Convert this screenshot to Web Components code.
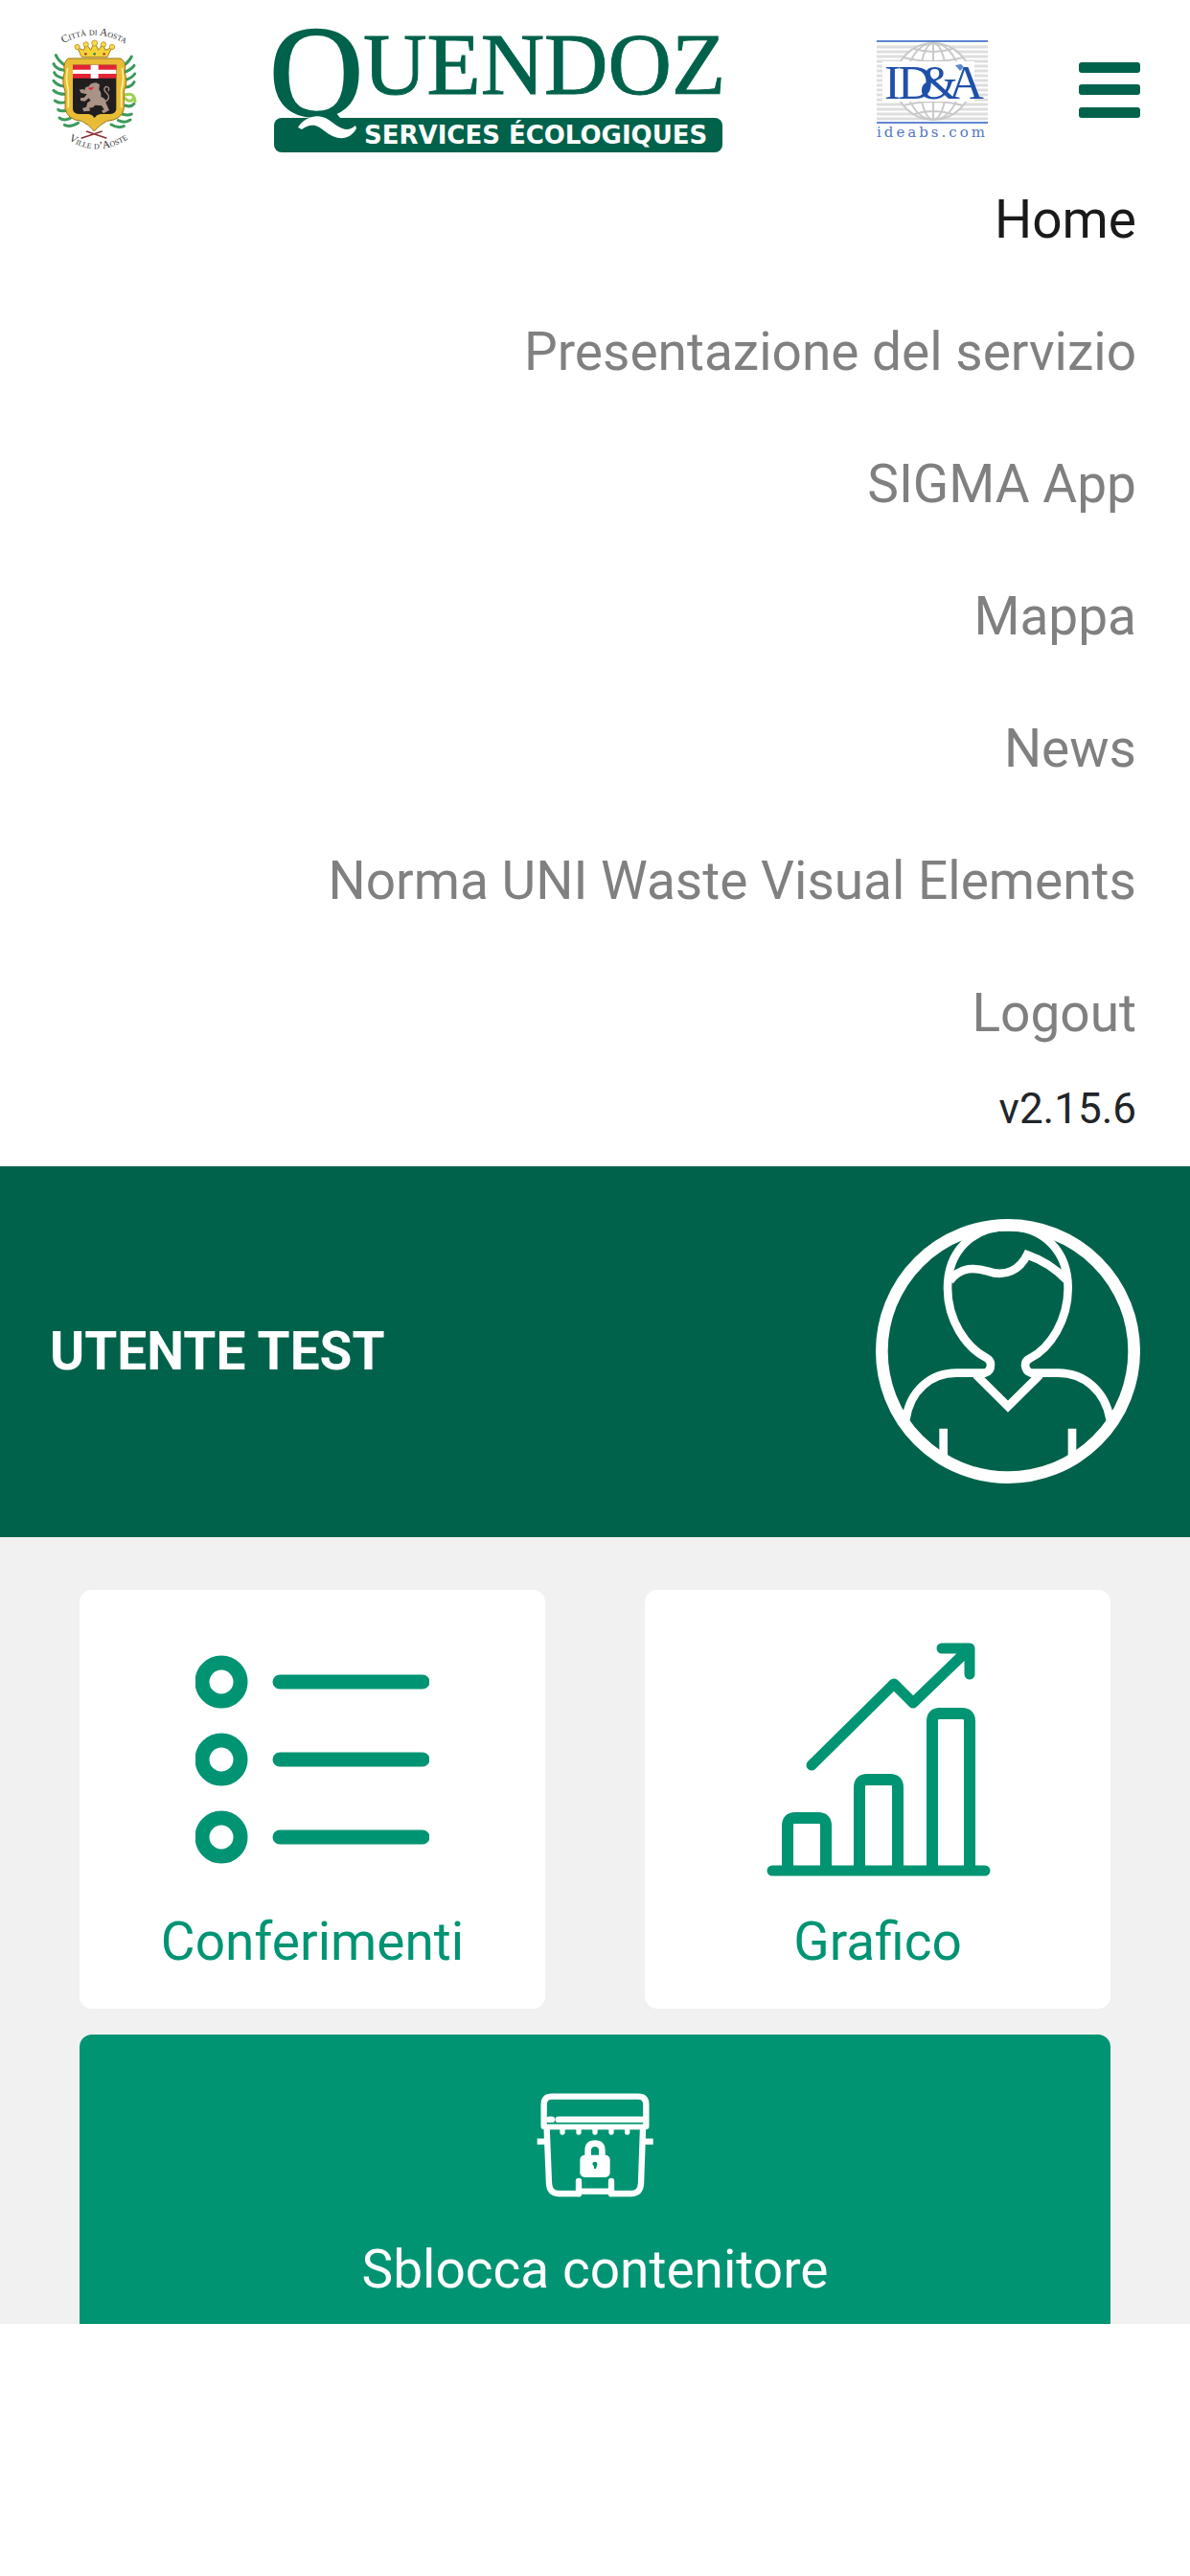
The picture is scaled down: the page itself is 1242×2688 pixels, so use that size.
<!DOCTYPE html>
<html lang="it">
<head>
<meta charset="utf-8">
<meta name="viewport" content="width=device-width, initial-scale=1">
<title>Quendoz</title>
<style>
:root{--dark:#00624b;--teal:#009473;--page:#f1f1f1;--gutter:52px;--text:55px;--line:81px}
body{margin:0;background:#fff;font-family:Roboto,"Liberation Sans",sans-serif;font-size:var(--text);line-height:var(--line);color:#212529}
</style>
</head>
<body>
<app-shell>
  <app-header slot="header"></app-header>
  <app-menu slot="header" version="v2.15.6">
    <menu-item current>Home</menu-item>
    <menu-item>Presentazione del servizio</menu-item>
    <menu-item>SIGMA App</menu-item>
    <menu-item>Mappa</menu-item>
    <menu-item>News</menu-item>
    <menu-item>Norma UNI Waste Visual Elements</menu-item>
    <menu-item>Logout</menu-item>
  </app-menu>
  <user-banner>UTENTE TEST</user-banner>
  <tile-grid>
    <action-tile icon="list">Conferimenti</action-tile>
    <action-tile icon="chart">Grafico</action-tile>
    <action-tile icon="bin" primary>Sblocca contenitore</action-tile>
  </tile-grid>
</app-shell>

<script>
const define = (name, render) => customElements.define(name, class extends HTMLElement {
  connectedCallback() {
    if (this.shadowRoot) return;
    this.attachShadow({ mode: 'open' }).innerHTML = render(this);
  }
});

define('app-shell', () => `
<style>:host{display:block}header,main{display:block}</style>
<header><slot name="header"></slot></header>
<main><slot></slot></main>`);

define('city-crest', () => `
<style>:host{display:block}svg{display:block;width:93px;height:133px;overflow:visible}</style>
<svg viewBox="36 36 279 399" role="img" aria-label="Città di Aosta">
  <defs>
    <path id="top" d="M60 102 Q172 28 290 102"/>
    <path id="bot" d="M72 376 Q180 468 304 374"/>
  </defs>
  <g font-family="Liberation Serif, serif" font-size="34" font-variant="small-caps" fill="#333" text-anchor="middle">
    <text><textPath href="#top" startOffset="50%">Città di Aosta</textPath></text>
    <text><textPath href="#bot" startOffset="50%">Ville d’Aoste</textPath></text>
  </g>
  <g fill="none" stroke="#3d9a5b" stroke-width="9" stroke-linecap="round">
    <path d="M84 160 Q62 145 55 128M80 175 Q55 172 48 155M80 200 Q55 195 50 182M80 225 Q58 222 48 208M84 250 Q60 250 48 238M84 275 Q64 280 52 270M90 300 Q70 306 62 298M100 325 Q80 335 66 324M125 340 Q100 355 82 346"/>
    <path d="M268 160 Q286 145 292 132M272 180 Q292 172 300 160M274 205 Q292 200 302 186M274 228 Q292 226 300 212M272 285 Q290 292 300 280M262 312 Q282 318 292 312M250 332 Q272 342 288 330M228 345 Q250 358 268 350"/>
    <path stroke="#9ed052" d="M272 252 Q300 242 303 272M270 262 Q290 280 298 262"/>
  </g>
  <path d="M134 388 L200 366 M214 388 L150 366" stroke="#8d2f35" stroke-width="5"/>
  <path d="M94 138 Q76 150 82 180 Q72 215 84 240 V296 Q92 330 136 334 Q160 345 175 366 Q192 345 214 334 Q262 330 268 296 V240 Q282 215 270 180 Q278 150 258 138 Z" fill="#e8bd35" stroke="#987318" stroke-width="3"/>
  <path d="M92 168 Q84 200 94 236 V292 M262 168 Q270 200 260 236 V292" fill="none" stroke="#fff0a0" stroke-width="5"/>
  <path d="M122 104 L136 134 H216 L230 104 L210 112 L202 92 L188 112 L176 84 L164 112 L150 92 L142 112 Z" fill="#f5d338" stroke="#a4801e" stroke-width="3"/>
  <g fill="#f5dc4c" stroke="#a4801e" stroke-width="2"><circle cx="122" cy="102" r="8"/><circle cx="149" cy="94" r="8"/><circle cx="176" cy="90" r="9"/><circle cx="204" cy="94" r="8"/><circle cx="231" cy="102" r="8"/></g>
  <g fill="#b53b28"><circle cx="148" cy="124" r="4"/><circle cx="206" cy="124" r="4"/></g><circle cx="176" cy="124" r="4" fill="#2d8752"/>
  <path d="M108 158 H244 V298 Q242 312 222 312 H194 Q182 314 176 324 Q170 314 158 312 H130 Q110 312 108 298Z" fill="#211e1f"/>
  <path d="M108 158 H244 V200 H108Z" fill="#e32435"/>
  <path d="M108 173 H244 V186 H108Z M164 158 H188 V200 H164Z" fill="#fff"/>
  <path d="M146 238 Q144 226 158 226 Q162 214 182 214 L192 220 L190 236 Q198 242 196 258 Q212 262 212 278 L222 300 L204 310 L198 302 L206 298 L198 286 L178 284 Q172 294 160 292 L162 302 L142 304 L138 294 L150 290 L154 276 L164 270 L158 262 L146 272 L132 270 L132 262 L144 260 L152 250 L134 246 L128 236 L140 234 Z" fill="#a99286"/>
  <path d="M208 274 Q230 262 214 246 Q200 234 212 226 Q224 226 220 240" fill="none" stroke="#a99286" stroke-width="4"/>
  <path d="M154 231 L174 227 L166 238Z" fill="#e32435"/>
</svg>`);

define('quendoz-logo', () => `
<style>:host{display:block}svg{display:block;width:469px;height:133px;overflow:visible}</style>
<svg viewBox="0 0 469 133" role="img" aria-label="Quendoz Services Écologiques">
  <g font-family="Liberation Serif, serif" fill="#00624b" stroke="#00624b">
    <text x="-4" y="94" font-size="136" stroke-width="2">Q</text>
    <text x="94" y="71" font-size="92" stroke-width="1">UENDOZ</text>
  </g>
  <rect x="1" y="96" width="468" height="36" rx="8" fill="#00624b"/>
  <path d="M26 106 C32 96 46 90 58 98 C68 105 76 113 86 104 L87 107 C80 120 66 120 54 110 C44 101 37 103 30 108Z" fill="#fff"/>
  <text x="95" y="123" font-family="DejaVu Sans, sans-serif" font-weight="700" font-size="26" fill="#fff">SERVICES ÉCOLOGIQUES</text>
</svg>`);

define('idea-logo', () => `
<style>:host{display:block}svg{display:block;width:120px;height:104px;overflow:visible}</style>
<svg viewBox="0 0 120 104" role="img" aria-label="ID&amp;A ideabs.com">
  <path d="M1 7H117M1 12H117M1 17H117M1 22H117M1 27H117M1 32H117M1 37H117M1 42H117M1 47H117M1 52H117M1 57H117M1 62H117M1 67H117M1 72H117M1 77H117M1 82H117" stroke="#dedede" stroke-width="3"/>
  <circle cx="60" cy="43" r="40" fill="#fff"/>
  <g fill="none" stroke="#c9c9c9" stroke-width="2">
    <circle cx="60" cy="43" r="40"/><ellipse cx="60" cy="43" rx="14" ry="40"/><ellipse cx="60" cy="43" rx="28" ry="40"/>
    <path d="M60 3V83M40 9Q60 15 80 9M29 18Q60 26 91 18M29 68Q60 60 91 68M40 77Q60 71 80 77"/>
  </g>
  <path d="M7 22H103V64H7Z" fill="#fff"/>
  <path d="M1 1H117M1 86H117" stroke="#5f85cf" stroke-width="2"/>
  <text x="9 23 46 76" y="61" font-family="Liberation Serif, serif" font-size="51" fill="#1f50a9">ID&amp;A</text>
  <path d="M83 26 L89 25 L92 28 L88 32Z" fill="#5f85cf"/>
  <text x="1" y="101" font-family="DejaVu Serif, serif" font-size="15" letter-spacing="3" fill="#5578c4">ideabs.com</text>
</svg>`);

define('app-header', () => `
<style>
:host{display:grid;grid-template-columns:233fr 629fr 212fr 64px;align-items:center;padding:27px var(--gutter) 0}
button{display:block;padding:0;border:0;background:none;color:var(--dark);cursor:pointer}
svg{display:block;width:64px;height:58px}
</style>
<city-crest></city-crest><quendoz-logo></quendoz-logo><idea-logo></idea-logo>
<button type="button" aria-label="Menu" aria-expanded="true"><svg viewBox="0 0 64 58" fill="currentColor"><rect y="0" width="64" height="11" rx="3"/><rect y="23" width="64" height="11" rx="3"/><rect y="47" width="64" height="11" rx="3"/></svg></button>`);

define('app-menu', el => `
<style>
:host{display:block;padding:0 56px 29px;text-align:right}
nav{display:flex;flex-direction:column;align-items:flex-end}
p{margin:0;font-size:44px;line-height:62px}
</style>
<nav aria-label="Menu principale"><slot></slot></nav>
<p>${el.getAttribute('version')}</p>`);

define('menu-item', el => `
<style>
:host{display:block}
a{display:block;line-height:138px;color:#808080;text-decoration:none}
:host([current]) a{color:#1a1a1a}
</style>
<a href="#"${el.hasAttribute('current') ? ' aria-current="page"' : ''}><slot></slot></a>`);

define('user-banner', () => `
<style>
:host{display:flex;align-items:center;justify-content:space-between;padding:55px var(--gutter) 56px;background:var(--dark);color:#fff}
h1{margin:0;font-size:inherit;line-height:inherit;font-weight:700}
svg{display:block;width:276px;height:276px}
</style>
<h1><slot></slot></h1>
<svg viewBox="43 68 828 828" fill="none" stroke="#fff" stroke-width="26" aria-hidden="true">
  <circle cx="457" cy="482" r="395" stroke-width="38"/>
  <path d="M137 696 C150 606 215 550 295 550 H385 Q403 545 403 524 Q403 510 390 503 C325 470 268 385 268 285 C268 170 345 92 457 92 C570 92 645 170 645 285 C645 385 590 470 528 503 Q511 510 511 526 Q513 546 530 550 H615 C695 550 762 606 777 696"/>
  <path d="M357 556 L457 655 L557 556"/>
  <path d="M275 262 C310 215 355 220 395 232 C450 252 495 225 517 180 Q590 205 640 259"/>
  <path d="M255 724 V820 M658 724 V820"/>
</svg>`);

define('tile-grid', () => `
<style>:host{display:grid;grid-template-columns:1fr 1fr;gap:27px 104px;padding:55px 83px 0;background:var(--page)}</style>
<slot></slot>`);

const icons = {
  list: `<svg viewBox="0 0 244 244"><g fill="none" stroke="currentColor" stroke-width="15">
    <circle cx="27" cy="41" r="20"/><circle cx="27" cy="122" r="20"/><circle cx="27" cy="203" r="20"/>
    <path stroke-linecap="round" d="M88 41H237M88 122H237M88 203H237"/></g></svg>`,
  chart: `<svg viewBox="0 0 244 244"><g fill="none" stroke="currentColor" stroke-width="12" stroke-linecap="round" stroke-linejoin="round">
    <path stroke-width="11" d="M12 238H234"/>
    <path stroke-linecap="butt" d="M28 238V191Q28 183 36 183H60Q68 183 68 191V238M103 238V151Q103 143 111 143H135Q143 143 143 151V238M179 238V82Q179 74 187 74H210Q218 74 218 82V238"/>
    <path stroke-width="11" d="M53 128L139 43L159 63L218 6M189 6H218V33"/></g></svg>`,
  bin: `<svg viewBox="120 234 366 366"><g fill="none" stroke="currentColor" stroke-width="19" stroke-linecap="round" stroke-linejoin="round">
    <path d="M143 356V288Q143 263 168 263H438Q463 263 463 288V356"/>
    <path d="M160 335H168M188 335H455"/><path stroke-width="17" d="M150 358H456"/>
    <path d="M152 365L159 535Q161 567 190 567H247M453 365L447 535Q445 567 416 567H359M252 528V568M354 528V568M252 560H354"/>
    <path stroke-width="16" d="M201 365V375M252 365V375M303 365V375M354 365V375M404 365V375"/>
    <path stroke-linecap="butt" d="M122 404H150M455 404H485"/>
    <path stroke-width="20" d="M281 455V432Q281 410 303 410Q325 410 325 432V455"/></g>
    <rect x="256" y="446" width="94" height="70" rx="15" fill="currentColor"/>
    <path d="M295 475Q295 467 303 467Q311 467 310 476L306 489H300V482Z" fill="var(--teal)"/></svg>`
};

define('action-tile', el => `
<style>
:host{display:block;--size:244px}
:host([primary]){grid-column:1/-1;--size:122px}
button{display:flex;flex-direction:column;align-items:center;gap:28px;width:100%;padding:55px 16px 29px;border:0;border-radius:13px;background:#fff;color:var(--teal);font:inherit;cursor:pointer}
:host([primary]) button{padding-bottom:16px;border-radius:13px 13px 0 0;background:var(--teal);color:#fff}
svg{display:block;width:var(--size);height:var(--size)}
</style>
<button type="button">${icons[el.getAttribute('icon')]}<span><slot></slot></span></button>`);
</script>
</body>
</html>
